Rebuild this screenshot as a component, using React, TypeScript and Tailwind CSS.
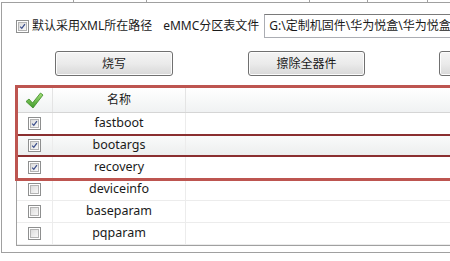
import React from 'react';

const FONT = { fontFamily: '"Noto Sans", "Noto Sans CJK SC", sans-serif' };

type Row = { name: string; checked: boolean; hot?: boolean };

const ROWS: Row[] = [
  { name: 'fastboot', checked: true },
  { name: 'bootargs', checked: true, hot: true },
  { name: 'recovery', checked: true },
  { name: 'deviceinfo', checked: false },
  { name: 'baseparam', checked: false },
  { name: 'pqparam', checked: false },
];

function CheckBox({ checked }: { checked: boolean }) {
  return (
    <div className="shrink-0 w-[13px] h-[13px] border border-[#8e8f8f] bg-white p-[1px]">
      <div className="relative w-full h-full border border-[#b4b4b4] bg-gradient-to-br from-[#dcdcdc] to-[#f8f8f8]">
        {checked && (
          <svg viewBox="0 0 9 9" className="absolute inset-0 w-full h-full">
            <path d="M1.5 4.6 L3.6 6.9 L7.6 1.4" fill="none" stroke="#3c4f8c" strokeWidth="1.6" />
          </svg>
        )}
      </div>
    </div>
  );
}

function GreenTick() {
  return (
    <svg width="19" height="17" viewBox="0 0 19 17">
      <defs>
        <linearGradient id="gt" x1="0" y1="0" x2="0" y2="1">
          <stop offset="0" stopColor="#a6e07a" />
          <stop offset="1" stopColor="#3f9a2a" />
        </linearGradient>
      </defs>
      <path
        d="M1 9.5 L4 7 L7.5 11 L15.5 1 L18 3 L8 16 Z"
        fill="url(#gt)"
        stroke="#3a8a25"
        strokeWidth="0.8"
        strokeLinejoin="round"
      />
    </svg>
  );
}

function Btn({ label, className }: { label: string; className?: string }) {
  return (
    <div
      className={
        'shrink-0 h-[25px] flex items-center justify-center rounded-[3px] border border-[#707070] bg-gradient-to-b from-[#f4f4f4] via-[#ebebeb] to-[#d8d8d8] text-[12px] text-[#1a1a1a] shadow-[inset_0_0_0_1px_#fcfcfc] ' +
        (className ?? '')
      }
    >
      {label}
    </div>
  );
}

export default function App() {
  return (
    <div className="relative w-[450px] h-[261px] overflow-hidden bg-white text-[#1a1a1a]" style={FONT}>
      {/* cut-off tabs above */}
      <div className="flex h-[2px]">
        <div className="w-[74px] border-r border-[#a0a0a0]" />
        <div className="w-[73px] border-r border-[#a0a0a0]" />
        <div className="w-[163px] border-r border-[#a0a0a0]" />
        <div className="w-[58px] border-r border-[#a0a0a0]" />
        <div className="w-[60px] border-r border-[#a0a0a0]" />
      </div>

      {/* group panel */}
      <div className="ml-[1px] w-[480px] h-[251px] border-l border-t border-b border-[#a0a0a0] pl-[14px]">
        {/* options row */}
        <div className="flex items-center h-[24px] mt-[11px] whitespace-nowrap">
          <CheckBox checked />
          <span className="ml-[3px] text-[12px] shrink-0">默认采用XML所在路径</span>
          <span className="ml-[11px] text-[12px] shrink-0">eMMC分区表文件</span>
          <div className="shrink-0 ml-[5px] h-[24px] w-[200px] border border-[#abadb3] border-t-[#7a7a7a] bg-white flex items-center pl-[4px] text-[12px] overflow-hidden">
            G:\定制机固件\华为悦盒\华为悦盒
          </div>
        </div>

        {/* buttons row */}
        <div className="flex mt-[13px]">
          <Btn label="烧写" className="ml-[39px] w-[118px]" />
          <Btn label="擦除全器件" className="ml-[75px] w-[117px]" />
          <Btn label="" className="ml-[74px] w-[60px]" />
        </div>

        {/* list */}
        <div className="mt-[12px] w-[460px] border-l border-b border-[#a0a0a0] bg-white">
          <div className="flex h-[25px] border-b border-[#d5d5d5] bg-gradient-to-b from-white to-[#f0f2f3]">
            <div className="w-[36px] flex items-center justify-center border-r border-[#e4e4e4]">
              <GreenTick />
            </div>
            <div className="w-[133px] flex items-center justify-center border-r border-[#e4e4e4] text-[12px]">名称</div>
            <div className="flex-1" />
          </div>
          {ROWS.map((r) => (
            <div
              key={r.name}
              className={
                'flex h-[22px] border-b border-[#ececec] ' +
                (r.hot ? 'bg-gradient-to-b from-[#fafbfb] to-[#eceeee]' : 'bg-white')
              }
            >
              <div className="w-[36px] flex items-center justify-center border-r border-[#ececec]">
                <CheckBox checked={r.checked} />
              </div>
              <div className="w-[133px] flex items-center justify-center border-r border-[#ececec] text-[12.5px]">
                {r.name}
              </div>
              <div className="flex-1" />
            </div>
          ))}
        </div>
      </div>

      {/* red highlight marks */}
      <div className="absolute left-[15px] top-[85px] w-[460px] h-[96px] border-[3px] border-[#bd5550]" />
      <div className="absolute left-[18px] top-[134px] w-[460px] h-[23px] border-y-2 border-[#8a2f30]" />
    </div>
  );
}
